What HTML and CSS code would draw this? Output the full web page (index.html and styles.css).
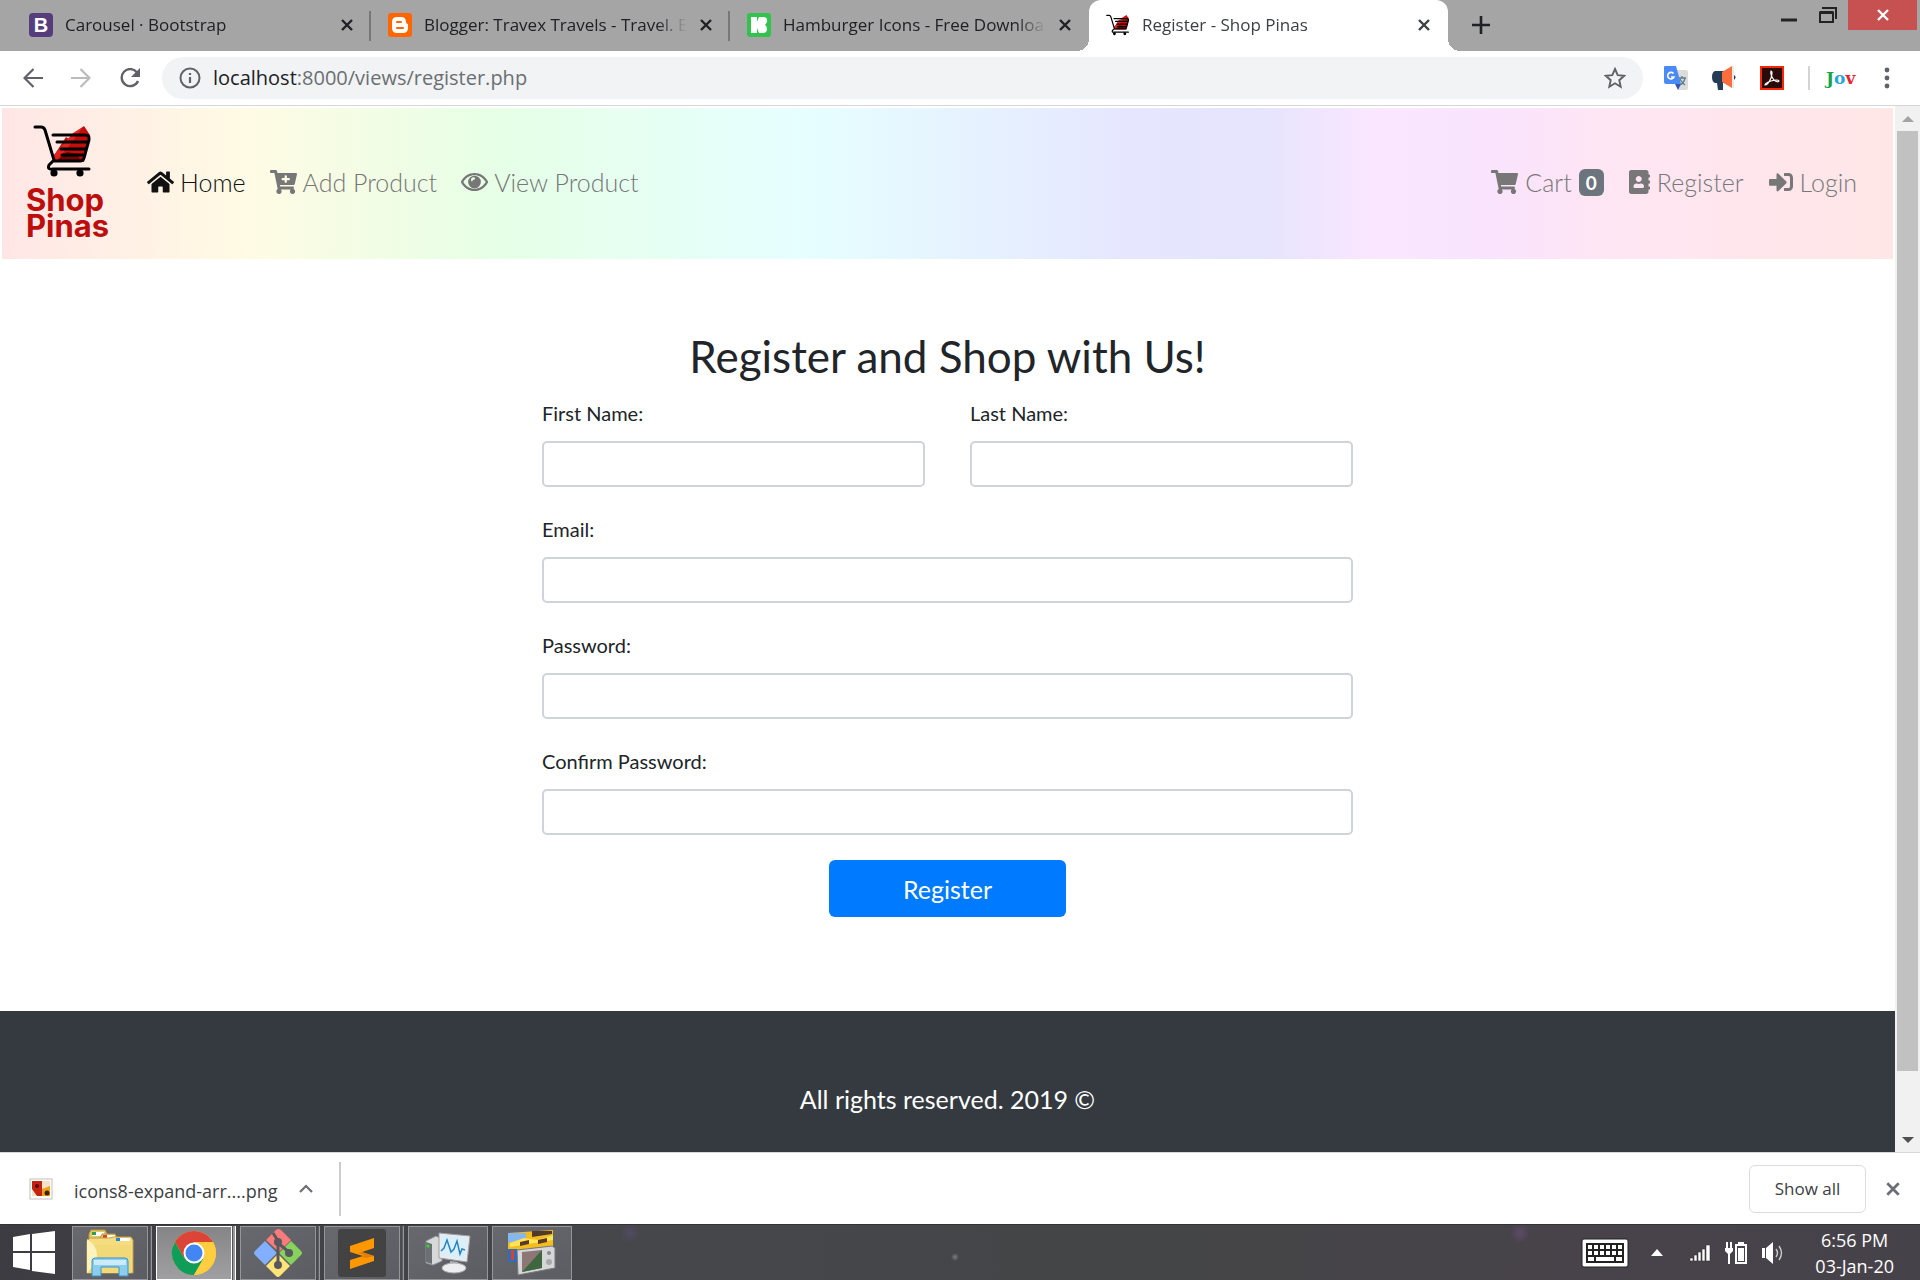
FILE: index.html
```html
<!DOCTYPE html>
<html lang="en">
<head>
<meta charset="utf-8">
<title>Register - Shop Pinas</title>
<link rel="stylesheet" href="styles.css">
</head>
<body>
<svg class="defs" aria-hidden="true">
  <symbol id="x" viewBox="0 0 14 14"><path d="M2 2l10 10M12 2L2 12" fill="none" stroke="currentColor" stroke-width="2.4"/></symbol>
  <symbol id="logo-cart" viewBox="0 0 60 52">
    <path d="M20 32L33 12l3 2 4-5 11-8 6 9-6 27H23z" fill="#c40d0d"/>
    <path d="M20 31l13-15 7-8 10-6-14 19-13 15z" fill="#e02424"/>
    <path d="M24 36l10-9 10 2 4 7z" fill="#6d0606"/>
    <path d="M2 2h6q3 0 4 3l9 30-5 5q-2 5 4 4h36M20 10h32q5 0 4 5l-5 18q-1 3-4 3H22M24 17h30M28 24h24M29 30h21" fill="none" stroke="#000" stroke-width="3" stroke-linecap="round"/>
    <circle cx="21" cy="48" r="3.6"/><circle cx="47" cy="48" r="3.6"/>
  </symbol>
</svg>

<header class="tabstrip">
  <div class="tab">
    <span class="favicon bootstrap">B</span>
    <span class="tab-title">Carousel · Bootstrap</span>
    <button class="icon-btn" aria-label="Close tab"><svg class="close"><use href="#x"/></svg></button>
  </div>
  <div class="tab">
    <svg class="favicon" viewBox="0 0 24 24"><rect width="24" height="24" rx="3" fill="#f60"/><path d="M9 4h4q5 0 5 5 0 2 2 2v4q0 5-5 5H9q-5 0-5-5V9q0-5 5-5z" fill="#fff"/><path d="M9 9h4M9 15h6" stroke="#f60" stroke-width="2" stroke-linecap="round"/></svg>
    <span class="tab-title">Blogger: Travex Travels - Travel. E</span>
    <button class="icon-btn" aria-label="Close tab"><svg class="close"><use href="#x"/></svg></button>
  </div>
  <div class="tab">
    <svg class="favicon" viewBox="0 0 24 24"><rect width="24" height="24" rx="3" fill="#33c24d"/><path d="M4 4h6v16H4z" fill="#fff"/><path d="M10 9l2-5h4q5 0 4 5-1 2-2 3 2 1 2 4 0 4-4 4h-4l-2-5z" fill="#fff"/></svg>
    <span class="tab-title">Hamburger Icons - Free Downloa</span>
    <button class="icon-btn" aria-label="Close tab"><svg class="close"><use href="#x"/></svg></button>
  </div>
  <div class="tab active">
    <svg class="favicon"><use href="#logo-cart"/></svg>
    <span class="tab-title">Register - Shop Pinas</span>
    <button class="icon-btn" aria-label="Close tab"><svg class="close"><use href="#x"/></svg></button>
  </div>
  <button class="icon-btn new-tab" aria-label="New tab"><svg width="18" height="18" viewBox="0 0 18 18"><path d="M9 0v18M0 9h18" stroke="#202124" stroke-width="2.6"/></svg></button>
  <div class="window-controls">
    <button class="icon-btn" aria-label="Minimize"><svg width="16" height="14"><path d="M0 12h16" stroke="#222" stroke-width="3"/></svg></button>
    <button class="icon-btn" aria-label="Restore"><svg width="18" height="16" viewBox="0 0 18 16"><path d="M3 1h14v11M1 5.500h13V15H1z" fill="none" stroke="#222" stroke-width="2"/><path d="M1 5.500h13" stroke="#222" stroke-width="3"/></svg></button>
    <button class="icon-btn window-close" aria-label="Close"><svg class="close"><use href="#x"/></svg></button>
  </div>
</header>

<div class="toolbar">
  <div class="nav-buttons">
    <button class="icon-btn" aria-label="Back"><svg width="20" height="20" viewBox="0 0 20 20"><path d="M20 10H2M10.500 1L1.500 10l9 9" fill="none" stroke="#5f6368" stroke-width="2.200"/></svg></button>
    <button class="icon-btn" aria-label="Forward"><svg width="20" height="20" viewBox="0 0 20 20"><path d="M0 10h18M9.500 1l9 9-9 9" fill="none" stroke="#bbb" stroke-width="2.200"/></svg></button>
    <button class="icon-btn" aria-label="Reload"><svg width="22" height="20" viewBox="0 0 22 20"><path d="M18 4.500A8.500 8.500 0 1 0 19 13" fill="none" stroke="#5f6368" stroke-width="2.400"/><path d="M21 0v9h-9z" fill="#5f6368"/></svg></button>
  </div>
  <div class="omnibox">
    <svg width="22" height="22" viewBox="0 0 22 22"><circle cx="11" cy="11" r="9.500" fill="none" stroke="#5f6368" stroke-width="2"/><path d="M11 10v6M11 6v2" stroke="#5f6368" stroke-width="2.200"/></svg>
    <span class="url"><b>localhost</b>:8000/views/register.php</span>
    <svg width="22" height="22" viewBox="0 0 22 22"><path d="M11 2l2.700 6.200 6.500.600-4.900 4.400 1.400 6.500-5.700-3.400-5.700 3.400 1.400-6.500-4.900-4.400 6.500-.600z" fill="none" stroke="#5f6368" stroke-width="1.900"/></svg>
  </div>
  <div class="extensions">
    <svg width="24" height="24" viewBox="0 0 24 24"><path d="M12 4h10q2 0 2 2v16q0 2-2 2h-8z" fill="#dcdcdc"/><path d="M14 24l3-6h-6z" fill="#3a52b4"/><path d="M1 0h11l5 18H2q-2 0-2-2V1q0-1 1-1z" fill="#4a8af4"/><path d="M9.500 7.500A3.300 3.300 0 1 0 10 11H7" fill="none" stroke="#fff" stroke-width="1.600"/><path d="M15 12h7M18 10v2M21 12q-1 5-5 7M16 13q2 4 5 6" fill="none" stroke="#5b7f86" stroke-width="1.300"/></svg>
    <svg width="24" height="24" viewBox="0 0 24 24"><path d="M3 5h10v12h-2v7H6l-1-7H3q-3-1-3-6t3-6z" fill="#243c55"/><path d="M10 6l10-6v22l-10-6z" fill="#fe6d3c"/><path d="M20 0h2v22h-2z" fill="#e9ecef"/><path d="M22 9q3 2 0 5z" fill="#243c55"/></svg>
    <svg width="24" height="24" viewBox="0 0 24 24"><rect x="1" y="1" width="22" height="22" fill="#2b0b08" stroke="#f5290a" stroke-width="2"/><path d="M11 5q2 0 0 7-3 7-6 7 0-2 6-4 7-2 8 0-1 2-5-1-4-5-3-9z" fill="none" stroke="#fff" stroke-width="1.200"/></svg>
    <span class="divider"></span>
    <span class="jov"><i class="green">J</i><i class="blue">o</i><i class="red">v</i></span>
    <button class="icon-btn" aria-label="Menu"><svg width="6" height="22"><g fill="#5f6368"><circle cx="3" cy="3" r="2.400"/><circle cx="3" cy="11" r="2.400"/><circle cx="3" cy="19" r="2.400"/></g></svg></button>
  </div>
</div>

<div class="viewport">
  <div class="page">
    <nav class="navbar">
      <a class="brand" href="#"><svg width="60" height="52"><use href="#logo-cart"/></svg><span>Shop<br>Pinas</span></a>
      <a class="nav-link current" href="#"><svg width="27" height="24" viewBox="0 0 576 512"><path d="M280.37 148.26L96 300.11V464a16 16 0 0 0 16 16l112.06-.29a16 16 0 0 0 15.92-16V368a16 16 0 0 1 16-16h64a16 16 0 0 1 16 16v95.64a16 16 0 0 0 16 16.05L464 480a16 16 0 0 0 16-16V300L295.67 148.26a12.19 12.19 0 0 0-15.3 0zM571.6 251.47L488 182.56V44.05a12 12 0 0 0-12-12h-56a12 12 0 0 0-12 12v72.61L318.47 43a48 48 0 0 0-61 0L4.34 251.47a12 12 0 0 0-1.6 16.9l25.5 31A12 12 0 0 0 45.15 301l235.22-193.74a12.19 12.19 0 0 1 15.3 0L530.9 301a12 12 0 0 0 16.9-1.6l25.5-31a12 12 0 0 0-1.7-16.93z"/></svg>Home</a>
      <a class="nav-link" href="#"><svg width="27" height="24" viewBox="0 0 576 512"><path d="M504.717 320H211.572l6.545 32h268.418c15.401 0 26.816 14.301 23.403 29.319l-5.517 24.276C523.112 414.668 536 433.828 536 456c0 31.202-25.519 56.444-56.824 55.994-29.823-.429-54.35-24.631-55.155-54.447-.44-16.287 6.085-31.049 16.803-41.548H231.176C241.553 426.165 248 440.326 248 456c0 31.813-26.528 57.431-58.67 55.938-28.54-1.325-51.751-24.385-53.251-52.917-1.158-22.034 10.436-41.455 28.051-51.586L93.883 64H24C10.745 64 0 53.255 0 40V24C0 10.745 10.745 0 24 0h102.529c11.401 0 21.228 8.021 23.513 19.19L159.208 64H551.99c15.401 0 26.816 14.301 23.403 29.319l-47.273 208C525.637 312.246 515.923 320 504.717 320zM408 168h-48v-40c0-8.837-7.163-16-16-16h-16c-8.837 0-16 7.163-16 16v40h-48c-8.837 0-16 7.163-16 16v16c0 8.837 7.163 16 16 16h48v40c0 8.837 7.163 16 16 16h16c8.837 0 16-7.163 16-16v-40h48c8.837 0 16-7.163 16-16v-16c0-8.837-7.163-16-16-16z"/></svg>Add Product</a>
      <a class="nav-link" href="#"><svg width="27" height="24" viewBox="0 0 576 512"><path d="M288 64C165 64 58 136 3 241a32 32 0 0 0 0 30c55 105 162 177 285 177s230-72 285-177a32 32 0 0 0 0-30C518 136 411 64 288 64zm0 336c-100 0-188-56-238-144 50-88 138-144 238-144s188 56 238 144c-50 88-138 144-238 144z"/><path d="M288 120a136 136 0 1 0 0 272 136 136 0 0 0 0-272zm-60 126a54 54 0 0 1-14-36q0-54 54-54 32 0 32 28 0 24-32 26-24 4-24 30z" fill-rule="evenodd"/></svg>View Product</a>
      <div class="account-links">
        <a class="nav-link" href="#"><svg width="27" height="24" viewBox="0 0 576 512"><path d="M528.12 301.319l47.273-208C578.806 78.301 567.391 64 551.99 64H159.208l-9.166-44.81C147.758 8.021 137.93 0 126.529 0H24C10.745 0 0 10.745 0 24v16c0 13.255 10.745 24 24 24h69.883l70.248 343.435C147.325 417.1 136 435.222 136 456c0 30.928 25.072 56 56 56s56-25.072 56-56c0-15.674-6.447-29.835-16.824-40h209.647C430.447 426.165 424 440.326 424 456c0 30.928 25.072 56 56 56s56-25.072 56-56c0-22.172-12.888-41.332-31.579-50.405l5.517-24.276c3.413-15.018-8.002-29.319-23.403-29.319H218.117l-6.545-32h293.145c11.206 0 20.92-7.754 23.403-18.681z"/></svg>Cart<span class="count">0</span></a>
        <a class="nav-link" href="#"><svg width="21" height="24" viewBox="0 0 448 512"><path d="M436 160c6.6 0 12-5.4 12-12v-40c0-6.6-5.4-12-12-12h-20V48c0-26.5-21.5-48-48-48H48C21.5 0 0 21.5 0 48v416c0 26.5 21.5 48 48 48h320c26.5 0 48-21.5 48-48v-48h20c6.6 0 12-5.4 12-12v-40c0-6.6-5.4-12-12-12h-20v-64h20c6.6 0 12-5.4 12-12v-40c0-6.6-5.4-12-12-12h-20v-64h20zm-228-32c35.3 0 64 28.7 64 64s-28.7 64-64 64-64-28.7-64-64 28.7-64 64-64zm112 236.800c0 10.600-10 19.200-22.400 19.200H118.400C106 384 96 375.400 96 364.800v-19.200c0-31.800 30.100-57.600 67.200-57.600h5c12.300 5.100 25.700 8 39.800 8s27.600-2.900 39.800-8h5c37.100 0 67.200 25.800 67.200 57.600v19.200z"/></svg>Register</a>
        <a class="nav-link" href="#"><svg width="24" height="24" viewBox="0 0 512 512"><path d="M416 448h-84c-6.600 0-12-5.400-12-12v-40c0-6.600 5.400-12 12-12h84c17.700 0 32-14.300 32-32V160c0-17.700-14.300-32-32-32h-84c-6.600 0-12-5.400-12-12V76c0-6.600 5.400-12 12-12h84c53 0 96 43 96 96v192c0 53-43 96-96 96zm-47-201L201 79c-15-15-41-4.500-41 17v96H24c-13.300 0-24 10.700-24 24v96c0 13.300 10.700 24 24 24h136v96c0 21.500 26 32 41 17l168-168c9.300-9.400 9.300-24.600 0-34z"/></svg>Login</a>
      </div>
    </nav>
    <main>
      <h1>Register and Shop with Us!</h1>
      <form class="register-form">
        <div class="field-row">
          <div class="field"><label for="first">First Name:</label><input id="first" type="text"></div>
          <div class="field"><label for="last">Last Name:</label><input id="last" type="text"></div>
        </div>
        <div class="field"><label for="email">Email:</label><input id="email" type="email"></div>
        <div class="field"><label for="pass">Password:</label><input id="pass" type="password"></div>
        <div class="field"><label for="confirm">Confirm Password:</label><input id="confirm" type="password"></div>
        <button class="submit" type="button">Register</button>
      </form>
    </main>
    <footer>All rights reserved. 2019 ©</footer>
  </div>
  <div class="scrollbar">
    <svg class="arrow" viewBox="0 0 12 6"><path d="M0 6l6-6 6 6z" fill="#a3a3a3"/></svg>
    <div class="thumb"></div>
    <svg class="arrow" viewBox="0 0 12 6"><path d="M0 0h12L6 6z" fill="#505050"/></svg>
  </div>
</div>

<div class="downloads">
  <svg width="24" height="24" viewBox="0 0 24 24"><rect x="1" y="2" width="22" height="20" fill="#fff" stroke="#c4c0b8"/><rect x="3" y="4" width="18" height="15" fill="#f5e3c8"/><path d="M3 4h10v9l4 6H8l-5-7z" fill="#c22414"/><path d="M13 12l8-3v10h-8z" fill="#f0a11c"/><circle cx="8" cy="9" r="2" fill="#5d0c07"/><circle cx="18" cy="16" r="2.500" fill="#3a2508"/></svg>
  <span class="file">icons8-expand-arr....png</span>
  <button class="icon-btn" aria-label="Download options"><svg width="14" height="9" viewBox="0 0 14 9"><path d="M1 8l6-6 6 6" fill="none" stroke="#6b6f73" stroke-width="2.200"/></svg></button>
  <span class="file-divider"></span>
  <button class="show-all">Show all</button>
  <button class="icon-btn" aria-label="Close downloads"><svg width="16" height="16" class="dim"><use href="#x"/></svg></button>
</div>

<div class="taskbar">
  <button class="icon-btn start" aria-label="Start"><svg width="42" height="43" viewBox="0 0 42 43"><path d="M0 6l17-3v17H0zM19 3l23-3v20H19zM0 22h17v17L0 36zM19 22h23v21l-23-3z" fill="#fff"/></svg></button>
  <div class="tasks">
    <button class="task stacked" aria-label="File Explorer"><svg width="48" height="48" viewBox="0 0 48 48"><path d="M3 5l2-4h14l2 4v14H3z" fill="#e5c763" stroke="#b9973c"/><path d="M6 3h12v4H6z" fill="#fff"/><path d="M6 3h4v3H6z" fill="#2ca04a"/><path d="M14 9l2-4h13l2 4v10H14z" fill="#e5c763" stroke="#b9973c"/><path d="M17 6h12v4H17z" fill="#fff"/><path d="M17 6h4v3h-4z" fill="#d8432a"/><path d="M1 12l3-3h20l3-1h18l2 3v33H1z" fill="#f5dc80" stroke="#c5a040"/><path d="M1 16h44v28H1z" fill="#f2d978"/><path d="M1 44q20-20 0-34z" fill="#fff3bd"/><path d="M30 9h14v3H30z" fill="#fff"/><path d="M30 9h4v3h-4z" fill="#2486d8"/><path d="M6 47V32q0-3 3-3h30q3 0 3 3v15h-9v-9H15v9z" fill="#8acdec" stroke="#3995cc"/><path d="M8 31h32v5H8z" fill="#cbeafa"/></svg></button>
    <button class="task stacked running" aria-label="Google Chrome"><svg width="46" height="46" viewBox="0 0 46 46"><circle cx="23" cy="23" r="22" fill="#fcc934"/><path d="M3.900 12A22 22 0 0 1 42 12H23L13.500 28.500z" fill="#db4437"/><path d="M3.900 12A22 22 0 0 0 23 45l9.500-16.500L13.500 28.500z" fill="#0f9d58"/><path d="M23 45l9.500-16.500L32 13l10-1A22 22 0 0 1 23 45z" fill="#ffcd40"/><circle cx="23" cy="23" r="10.500" fill="#fff"/><circle cx="23" cy="23" r="8.500" fill="#4285f4"/></svg></button>
    <button class="task stacked" aria-label="Git"><svg width="48" height="48" viewBox="0 0 48 48"><path d="M24 0q2 0 3 1l10 10-12 12-13-12L22 1q1-1 2-1z" fill="#f97b7b"/><path d="M11 12l12 12-12 12L1 26q-2-2 0-4z" fill="#82b0ff"/><path d="M37 12l10 10q2 2 0 4L37 36 25 24z" fill="#86d25c"/><path d="M24 25l12 12-10 10q-2 2-4 0L12 37z" fill="#ffe478"/><path d="M19 4l5 8v24M24 14l12 10" stroke="#57595f" stroke-width="3" fill="none"/><circle cx="24" cy="13" r="4" fill="#57595f"/><circle cx="35" cy="24" r="4" fill="#57595f"/><circle cx="24" cy="36" r="4" fill="#57595f"/></svg></button>
    <button class="task stacked" aria-label="Sublime Text"><svg width="48" height="48" viewBox="0 0 48 48"><rect width="48" height="48" rx="3" fill="#434343"/><path d="M12 17l24-8v10l-12 4 12 4v5L12 40V31l13-4-13-4z" fill="#ff9800"/><path d="M24 23l12 4-8 2-4-1 2-2-6-2z" fill="#e27f00"/></svg></button>
    <button class="task" aria-label="System monitor"><svg width="46" height="42" viewBox="0 0 46 42"><path d="M1 9l10-5 6 3v22l-9 4-7-2z" fill="#d6d8da" stroke="#8e9296"/><path d="M1 10l6 2v20l-6-2z" fill="#6b7075"/><circle cx="3" cy="14" r="1.500" fill="#2be02b"/><path d="M25 29l8 1v6h-8z" fill="#aeb2b5"/><ellipse cx="29" cy="36" rx="12" ry="5" fill="#eceeef" stroke="#a8acaf"/><path d="M14 1l31 3-3 26-28-4z" fill="#e9ebed" stroke="#9ba0a4"/><path d="M16 3l26 3-2 21-24-4z" fill="#d9f0fb"/><path d="M16 19l3-3 3-8 4 12 3-3 3-8 3 13 2-5 3 1" fill="none" stroke="#2b83bd" stroke-width="1.500"/></svg></button>
    <button class="task" aria-label="Photo viewer"><svg width="48" height="46" viewBox="0 0 48 46"><path d="M0 3l45-3v20H0z" fill="#f3bd20"/><path d="M0 3h18v5L0 13z" fill="#86b6f0"/><path d="M24 1h20v3l-20 3z" fill="#503a28"/><path d="M2 13l14-5 14 2 15-5v5L2 17z" fill="#ffe358"/><path d="M12 12l9-2v4l-9 2zM30 10l9-2v4l-9 2z" fill="#5a3927"/><path d="M0 19h9v13H0z" fill="#2b6dbe"/><path d="M3 20h3v10H3z" fill="#dc4326"/><path d="M9 20l35-4 3 2v20L10 45z" fill="#d4d6d8" stroke="#777"/><path d="M14 22l20-2v18l-20 4z" fill="#8d7774"/><path d="M14 42l20-22v18z" fill="#3e673f"/><circle cx="41" cy="23" r="2" fill="#888"/><circle cx="41" cy="32" r="3" fill="#aaa"/></svg></button>
  </div>
  <div class="tray">
    <svg width="48" height="30" viewBox="0 0 48 30"><rect x="1" y="1" width="46" height="28" rx="2" fill="#fff" stroke="#222"/><rect x="5" y="5" width="38" height="20" fill="#222"/><path d="M7 9h34M7 15h34" stroke="#fff" stroke-width="4" stroke-dasharray="4 2"/><path d="M7 21h6M15 21h18M35 21h6" stroke="#fff" stroke-width="4"/></svg>
    <svg width="12" height="7" viewBox="0 0 12 7"><path d="M0 7l6-7 6 7z" fill="#fff"/></svg>
    <div class="status">
      <svg width="22" height="18" viewBox="0 0 22 18"><path d="M1 14h3v3H1zM5 11h3v6H5zM9 8h3v9H9zM13 5h3v12h-3zM17 1h4v16h-4z" fill="#fff" stroke="#333" stroke-width=".6"/></svg>
      <svg width="23" height="24" viewBox="0 0 23 24"><path d="M2 1v6M6 1v6M4 12v11" stroke="#fff" stroke-width="2" fill="none"/><path d="M0 7h8v3l-3 3H3l-3-3z" fill="#fff"/><rect x="11" y="4" width="10" height="18" fill="none" stroke="#fff" stroke-width="2"/><path d="M13 1h6v3h-6zM13 7h6v13h-6z" fill="#fff"/></svg>
      <svg width="23" height="24" viewBox="0 0 23 24"><path d="M0 7h3v10H0zM4 7l7-6v22l-7-6z" fill="#fff"/><path d="M14 8q3 4 0 8M17 5q5 7 0 14" stroke="#ccc" stroke-width="1.400" fill="none"/></svg>
    </div>
    <div class="clock">6:56 PM<br>03-Jan-20</div>
  </div>
</div>
</body>
</html>
```
FILE: styles.css
```css
* { box-sizing: border-box; }
body {
  margin: 0;
  height: 100vh;
  display: flex;
  flex-direction: column;
  overflow: hidden;
  font-family: "Open Sans", "Noto Sans", sans-serif;
  color: #202124;
  background: #fff;
}
svg { display: block; flex: none; }
a { text-decoration: none; }
.defs { position: absolute; width: 0; height: 0; }
.icon-btn {
  display: flex;
  align-items: center;
  justify-content: center;
  padding: 0;
  border: 0;
  background: none;
  color: inherit;
}
.close { width: 14px; height: 14px; }

/* Tab strip */
.tabstrip { display: flex; flex: none; height: 51px; padding-left: 12px; background: #a5a5a5; }
.tab {
  display: flex;
  align-items: center;
  gap: 12px;
  flex: 0 1 359px;
  min-width: 0;
  height: 51px;
  padding: 0 17px 2px;
  font-size: 17px;
  line-height: 24px;
  position: relative;
}
.tab:nth-child(-n+2)::after {
  content: "";
  position: absolute;
  right: 0;
  top: 11px;
  width: 2px;
  height: 30px;
  background: #777;
}
.tab-title {
  flex: 1;
  white-space: nowrap;
  overflow: hidden;
  mask-image: linear-gradient(to right, #000 calc(100% - 30px), transparent);
}
.favicon { width: 24px; height: 24px; flex: none; }
.bootstrap {
  border-radius: 4px;
  background: #563d7c;
  color: #fff;
  text-align: center;
  font: bold 20px/24px "Liberation Sans", sans-serif;
}
.tab.active { background: #fff; border-radius: 12px 12px 0 0; color: #3c4043; }
.tab.active::before, .tab.active::after {
  content: "";
  position: absolute;
  bottom: 0;
  width: 12px;
  height: 12px;
}
.tab.active::before { left: -12px; background: radial-gradient(circle at 0 0, #a5a5a5 12px, #fff 12px); }
.tab.active::after { right: -12px; background: radial-gradient(circle at 100% 0, #a5a5a5 12px, #fff 12px); }
.new-tab { width: 64px; height: 50px; padding-left: 2px; }
.window-controls { display: flex; gap: 22px; align-items: flex-start; margin-left: auto; padding-right: 3px; }
.window-controls .icon-btn { height: 30px; }
.window-controls .window-close { width: 69px; background: #c75050; color: #fff; margin-left: -11px; }

/* Toolbar */
.toolbar { display: flex; align-items: center; flex: none; height: 55px; border-bottom: 1px solid #d5d6d8; padding: 0 30px 0 23px; }
.nav-buttons { display: flex; gap: 28px; width: 139px; }
.omnibox {
  display: flex;
  align-items: center;
  flex: 1;
  gap: 12px;
  height: 42px;
  padding: 0 17px;
  border-radius: 21px;
  background: #f1f3f4;
}
.url { flex: 1; font-size: 20px; line-height: 28px; color: #6b6f73; }
.url b { font-weight: 400; color: #202124; }
.extensions { display: flex; align-items: center; gap: 24px; padding-left: 21px; }
.divider { width: 2px; height: 24px; margin-right: -8px; background: #d2d4d6; }
.jov { width: 34px; font: bold 17px/20px "DejaVu Serif", serif; }
.jov i { font-style: normal; }
.green { color: #18a54a; }
.blue { color: #28a4e2; }
.red { color: #e8232f; }

/* Page */
.viewport { display: flex; flex: 1; min-height: 0; }
.page { display: flex; flex-direction: column; flex: 1; font-family: Lato, "Open Sans", sans-serif; color: #212529; }
.navbar {
  display: flex;
  align-items: center;
  gap: 24px;
  margin: 2px 2px 0;
  padding: 17px 36px 20px 24px;
  background: linear-gradient(to right, #ffe6e6, #fffbe4 13%, #e6ffe6 26%, #e6ffff 42%, #e6e6ff 60%, #e7e4fd 67%, #f9e6ff 72%, #fae4fd 79%, #ffe6f2 86%, #ffe6e6);
}
.brand {
  display: flex;
  flex-direction: column;
  gap: 10px;
  width: 97px;
  color: #bd0d0d;
  font: bold 31px/26px Inter, sans-serif;
}
.brand svg { margin-left: 7px; }
.nav-link { display: flex; align-items: center; gap: 6px; font-size: 25px; font-weight: 300; line-height: 36px; color: #777; }
.nav-link svg { fill: #777; }
.nav-link.current { color: #111; }
.nav-link.current svg { fill: #111; }
.account-links { display: flex; gap: 25px; margin-left: auto; }
.account-links .nav-link { gap: 7px; }
.count {
  padding: 0 7px;
  border-radius: 6px;
  background: #6c757d;
  color: #fff;
  font-size: 19px;
  font-weight: 700;
  line-height: 27px;
}
main { flex: 1; padding: 70px 24px 0; }
h1 { margin: 0 0 15px; font-size: 44px; font-weight: 400; line-height: 54px; text-align: center; }
.register-form { display: flex; flex-direction: column; gap: 27px; max-width: 811px; margin: 0 auto; }
.field-row { display: grid; grid-template-columns: 1fr 1fr; gap: 45px; }
.field { display: flex; flex-direction: column; gap: 13px; }
.field label { font-size: 20px; line-height: 30px; }
.field input { width: 100%; height: 46px; border: 2px solid #ced4da; border-radius: 5px; background: #fff; }
.submit {
  align-self: center;
  width: 237px;
  height: 57px;
  margin-top: -2px;
  border: 0;
  border-radius: 6px;
  background: #007bff;
  color: #fff;
  font: 25px/36px Lato, sans-serif;
}
footer { padding: 70px 24px 35px; background: #343a40; color: #fff; font-size: 25px; line-height: 36px; text-align: center; }
.scrollbar { display: flex; flex-direction: column; align-items: center; width: 25px; flex: none; background: #f1f1f1; }
.arrow { width: 12px; height: 6px; margin: 10px 0 9px; }
.thumb { width: 21px; flex: 1; margin-bottom: 56px; background: #c1c1c1; }

/* Download shelf */
.downloads { display: flex; align-items: center; flex: none; height: 72px; padding: 0 19px 0 29px; border-top: 1px solid #d5d6d8; }
.file { margin: 0 21px; padding-top: 4px; font-size: 18px; line-height: 28px; color: #3c4043; }
.file-divider { width: 2px; height: 54px; margin-left: 26px; background: #ccc; }
.show-all {
  width: 117px;
  height: 48px;
  margin: 0 19px 0 auto;
  border: 1px solid #dadce0;
  border-radius: 6px;
  background: #fff;
  color: #3c4043;
  font: 500 17px/24px "Open Sans", sans-serif;
}
.dim { color: #6b6f73; }

/* Taskbar */
.taskbar {
  display: flex;
  align-items: center;
  flex: none;
  height: 56px;
  padding: 0 26px 0 13px;
  background:
    radial-gradient(circle at 630px 8px, #544a60 0, transparent 10px),
    radial-gradient(circle at 955px 32px, #777e80 0, transparent 4px),
    radial-gradient(ellipse at 1163px 32px, #5e4670 0, transparent 8px),
    radial-gradient(circle at 1520px 8px, #5e4a68 0, transparent 10px),
    linear-gradient(to right, #3d3c42, #45474b 32%, #444547 60%, #48434a 85%, #46424a);
  border-top: 1px solid #333;
}
.start { margin-right: 17px; }
.tasks { display: flex; gap: 4px; }
.task {
  display: flex;
  align-items: center;
  justify-content: center;
  width: 80px;
  height: 54px;
  padding: 0;
  border: 1px solid #96969a;
  background: linear-gradient(to bottom right, #68696d, #5c5d63);
}
.stacked { width: 76px; margin-right: 4px; box-shadow: 2px 0 0 #4b4b50, 3px 0 0 #5e5f64, 4px 0 0 #96969a; }
.running { border-color: #fff; background: linear-gradient(#858587, #a0a0a2); box-shadow: 1px 0 0 #555, 3px 0 0 #9a9a9c, 4px 0 0 #fff; }
.tray { display: flex; align-items: center; gap: 22px; margin-left: auto; }
.status { display: flex; align-items: center; gap: 14px; margin-left: 4px; }
.clock { margin-left: 8px; color: #fff; font-size: 18px; line-height: 26px; text-align: center; }
```
